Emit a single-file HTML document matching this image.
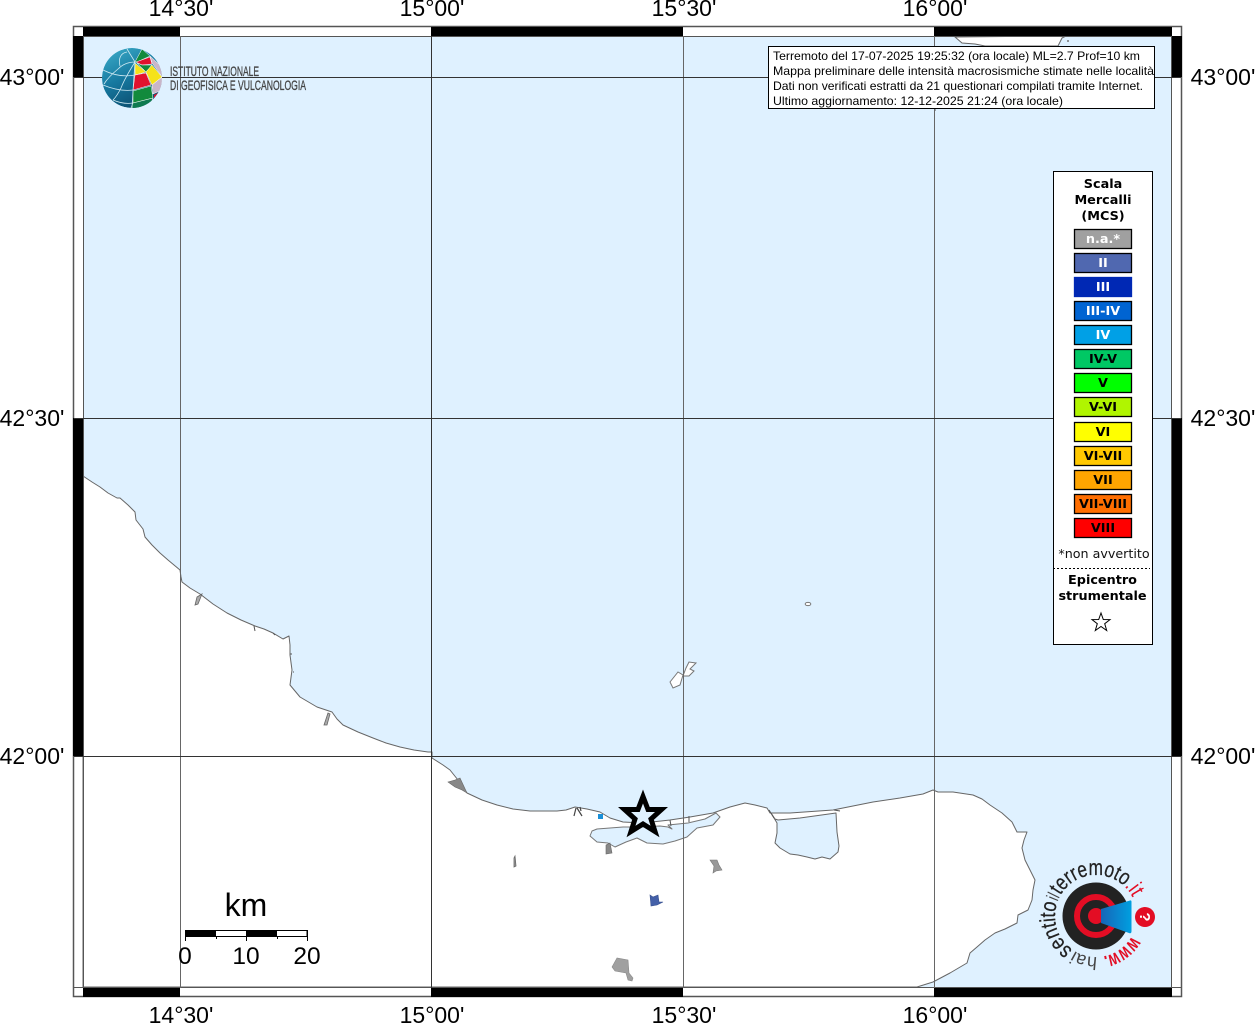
<!DOCTYPE html>
<html><head><meta charset="utf-8"><style>
html,body{margin:0;padding:0;background:#fff}
svg{display:block;filter:blur(0.35px)}
.ax{font:23px "Liberation Sans",sans-serif;fill:#000;text-anchor:middle}
.h{font:12px "Liberation Sans",sans-serif;fill:#000}
.lg{font:bold 12.8px "DejaVu Sans",sans-serif;text-anchor:middle}
.lb{font:bold 12.8px "DejaVu Sans",sans-serif;text-anchor:middle;fill:#000}
.ar{font:22px "Liberation Sans",sans-serif;fill:#222;stroke:#222;stroke-width:.25px}
</style></head><body>
<svg width="1255" height="1024" viewBox="0 0 1255 1024" xmlns="http://www.w3.org/2000/svg">
<defs>
<linearGradient id="gb" x1="0" y1="0" x2="0.5" y2="1"><stop offset="0" stop-color="#3fb0cc"/><stop offset="0.55" stop-color="#16789f"/><stop offset="1" stop-color="#0c4f70"/></linearGradient>
<linearGradient id="cone" x1="0" y1="0" x2="1" y2="0"><stop offset="0" stop-color="#1665b8"/><stop offset="1" stop-color="#00a0e0"/></linearGradient>
<clipPath id="gc"><circle cx="132" cy="78" r="30"/></clipPath>
<path id="ring" d="M1137 916A41 41 0 1 1 1055 916A41 41 0 1 1 1137 916"/>
</defs>
<!-- map -->
<rect x="83" y="36" width="1089" height="951" fill="#dff1ff"/>
<!-- land -->
<path fill="#fff" stroke="#666" stroke-width="1" stroke-linejoin="round" d="M83 476L92 482L100 487L108 493L117 498L120 498L128 505L135 512L136 520L143 529L145 537L152 545L160 553L168 560L180 570L181 577L182 582L190 588L200 594L213 604L227 613L241 620L255 626L264 629L273 633L283 639L289 636L290 645L290 655L292 670L290 685L300 697L317 707L332 712L337 719L343 725L358 732L373 738L386 743L400 747L414 750L428 752L432 752L432 758L443 765L450 770L458 780L467 793L482 800L497 805L513 809L530 811L557 811L566 810L575 807L587 809L600 812L610 818L623 822L643 823L670 820L690 817L713 813L730 807L745 803L755 805L767 808L770 813L790 813L833 810L853 806L873 802L900 798L923 794L933 790L938 792L953 792L973 795L982 799L990 805L1002 813L1012 822L1017 832L1027 832L1024 840L1022 848L1025 860L1030 870L1035 880L1033 890L1032 900L1028 910L1018 915L1017 923L1005 929L995 933L985 940L977 947L970 953L967 963L950 973L933 982L917 987L83 987Z"/>
<!-- top land -->
<path fill="#fff" stroke="#666" stroke-width="1" d="M955 37L962 43L975 44L985 46L1058 46L1062 38L1066 36Z"/>
<circle cx="1068" cy="41" r="1" fill="#777"/>
<path d="M935 108v3" stroke="#555" fill="none"/>
<!-- lagoons -->
<path fill="#dff1ff" stroke="#777" stroke-width="1" stroke-linejoin="round" d="M590 836L592 831L597 829L610 828L623 827L640 827L660 826L668 827L672 829L668 825L688 823L705 819L716 813L720 817L713 825L697 828L687 837L675 841L663 844L647 843L637 838L626 842L615 847L608 843L597 842Z"/>
<path fill="#dff1ff" stroke="#666" stroke-width="1" stroke-linejoin="round" d="M771 813L775 819L778 820L800 818L836 813L837 832L839 846L838 852L830 859L822 857L815 859L807 857L798 855L790 854L780 848L775 843L777 833L777 823Z"/>
<path fill="none" stroke="#555" stroke-width="1" d="M670 820L671 826M689 816L689 822M769 810L774 818M834 810L840 811"/>
<!-- details -->
<path fill="#888" stroke="#666" stroke-width=".6" d="M448 782L455 780L460 778L467 793L462 790L455 787Z"/>
<path fill="#888" stroke="#666" stroke-width=".6" d="M606 845L610 843L612 853L606 854Z"/>
<path fill="#999" stroke="#777" stroke-width=".6" d="M710 860L717 860L719 865L722 870L716 871L713 873L714 866Z"/>
<path fill="#a0a0a0" stroke="#888" stroke-width=".6" d="M612 967L617 958L628 960L629 973L633 978L632 981L628 980L626 973L615 971Z"/>
<path fill="#4460a8" stroke="#38518f" stroke-width=".6" d="M650 895L653 897L658 895L659 902L663 902L657 905L651 906Z"/>
<rect x="598" y="814" width="5" height="5" fill="#1a90d8"/>
<path fill="none" stroke="#444" stroke-width="1.2" d="M574 816L576 808M577 808L582 816M580 807L581 811"/>
<path fill="#999" stroke="#666" stroke-width=".8" d="M515 856L516 866L514 867L514 858Z"/>
<path fill="#aaa" stroke="#666" stroke-width=".8" d="M197 597L202 594L198 604L195 605Z"/>
<path fill="#aaa" stroke="#666" stroke-width=".8" d="M328 713L330 714L327 725L324 725Z"/>
<path fill="none" stroke="#555" d="M254 626L255 631M273 633L275 635M290 654l2 0M293 672l1 0"/>
<path fill="#fff" stroke="#777" stroke-width="1" d="M670 682L678 672L683 675L680 685L673 688Z"/>
<path fill="#fff" stroke="#777" stroke-width="1" d="M686 668L689 662L696 663L690 669L694 671L689 676L683 676Z"/>
<ellipse cx="808" cy="604" rx="2.8" ry="1.6" fill="#fff" stroke="#777"/>
<!-- frame -->
<rect x="73.500" y="26.500" width="1108" height="970" fill="none" stroke="#555" stroke-width="1.500"/>
<path fill="none" stroke="#555" stroke-width="1" d="M83.500 27V996M1171.500 27V996M74 36.500H1181M74 987.500H1181"/>
<path fill="#000" d="M83 27H180V36H83ZM431 27H683V36H431ZM934 27H1172V36H934ZM83 988H180V997H83ZM431 988H683V997H431ZM934 988H1172V997H934ZM73 36H83V77H73ZM73 418H83V756H73ZM1172 36H1182V77H1172ZM1172 418H1182V756H1172Z"/>
<!-- grid -->
<path fill="none" stroke="#666" stroke-width="1" d="M180.500 36V988M683.500 36V988M934.500 36V988"/>
<path fill="none" stroke="#333" stroke-width="1" d="M431.500 36V988M74 77.500H1181M74 418.500H1181M74 756.500H1181"/>
<!-- axis -->
<g class="ax">
<text x="181" y="16">14°30'</text><text x="432" y="16">15°00'</text><text x="684" y="16">15°30'</text><text x="935" y="16">16°00'</text>
<text x="181" y="1023">14°30'</text><text x="432" y="1023">15°00'</text><text x="684" y="1023">15°30'</text><text x="935" y="1023">16°00'</text>
<text x="32" y="85">43°00'</text><text x="32" y="426">42°30'</text><text x="32" y="764">42°00'</text>
<text x="1223" y="85">43°00'</text><text x="1223" y="426">42°30'</text><text x="1223" y="764">42°00'</text>
</g>
<!-- INGV logo -->
<g clip-path="url(#gc)">
<circle cx="132" cy="78" r="30" fill="url(#gb)"/>
<g stroke="#fff" stroke-width=".5">
<path fill="#128a3c" d="M135 62L142 49L150 56L137 62Z"/>
<path fill="#e2122e" d="M136 62L150 57L152 64L142 65Z"/>
<path fill="#c9b6c9" d="M150 56L163 68L163 78L152 63Z"/>
<path fill="#128a3c" d="M137 63L142 65L152 65L146 72Z"/>
<path fill="#f5e21a" d="M135 63L146 72L135 75Z"/>
<path fill="#f5e21a" d="M146 72L152 65L162 77L152 85Z"/>
<path fill="#e2122e" d="M135 75L146 73L151 85L133 90Z"/>
<path fill="#c9b6c9" d="M152 85L162 77L162 90L153 94Z"/>
<path fill="#128a3c" d="M133 91L151 86L153 98L133 103Z"/>
<path fill="#0e7a50" d="M133 103L153 98L148 110L130 110Z"/>
</g>
<path fill="#e2122e" d="M154 95L158 93L154 98Z"/>
<path fill="none" stroke="#cfeaf3" stroke-width=".8" d="M127 49L135 62M135 62C128 62 122 65 118 69C112 74 107 79 104 84M135 62C130 70 124 80 121 88C118 94 115 98 113 100M135 62C134 75 133 90 132 108M103 70C115 76 125 77 135 75M103 85C115 90 125 91 133 90M113 100C120 103 127 104 133 103M120 66C118 58 121 53 127 52"/>
</g>
<g font-family="'Liberation Sans',sans-serif" fill="#444" stroke="#444" stroke-width=".3" font-size="13.500">
<text x="170" y="76" textLength="89" lengthAdjust="spacingAndGlyphs">ISTITUTO NAZIONALE</text>
<text x="170" y="90" textLength="136" lengthAdjust="spacingAndGlyphs">DI GEOFISICA E VULCANOLOGIA</text>
</g>
<!-- header box -->
<rect x="768.500" y="46.500" width="386" height="62" fill="#fff" stroke="#000"/>
<text class="h" x="773" y="60" textLength="367" lengthAdjust="spacingAndGlyphs">Terremoto del 17-07-2025 19:25:32 (ora locale) ML=2.7 Prof=10 km</text>
<text class="h" x="773" y="75" textLength="381" lengthAdjust="spacingAndGlyphs">Mappa preliminare delle intensità macrosismiche stimate nelle località</text>
<text class="h" x="773" y="90" textLength="370" lengthAdjust="spacingAndGlyphs">Dati non verificati estratti da 21 questionari compilati tramite Internet.</text>
<text class="h" x="773" y="105" textLength="290" lengthAdjust="spacingAndGlyphs">Ultimo aggiornamento: 12-12-2025 21:24 (ora locale)</text>
<!-- legend -->
<rect x="1053.500" y="171.500" width="99" height="473" fill="#fff" stroke="#000"/>
<text class="lb" x="1103" y="188">Scala</text>
<text class="lb" x="1103" y="204">Mercalli</text>
<text class="lb" x="1103" y="220">(MCS)</text>
<g stroke="#000" stroke-width="1.300">
<rect x="1074.500" y="229.500" width="57" height="19" fill="#a0a0a0"/>
<rect x="1074.500" y="253.500" width="57" height="19" fill="#5068b0"/>
<rect x="1074.500" y="277.500" width="57" height="19" fill="#0028b4" stroke="#0028b4"/>
<rect x="1074.500" y="301.500" width="57" height="19" fill="#0064d2"/>
<rect x="1074.500" y="325.500" width="57" height="19" fill="#00a0e6"/>
<rect x="1074.500" y="349.500" width="57" height="19" fill="#00c864"/>
<rect x="1074.500" y="373.500" width="57" height="19" fill="#00ff00"/>
<rect x="1074.500" y="397.500" width="57" height="19" fill="#b0f500"/>
<rect x="1074.500" y="422.500" width="57" height="19" fill="#ffff00"/>
<rect x="1074.500" y="446.500" width="57" height="19" fill="#ffc800"/>
<rect x="1074.500" y="470.500" width="57" height="19" fill="#ffa500"/>
<rect x="1074.500" y="494.500" width="57" height="19" fill="#ff6e00"/>
<rect x="1074.500" y="518.500" width="57" height="19" fill="#ff0000"/>
</g>
<g class="lg" fill="#fff">
<text x="1103" y="243">n.a.*</text><text x="1103" y="267">II</text><text x="1103" y="291">III</text><text x="1103" y="315">III-IV</text><text x="1103" y="339">IV</text>
</g>
<g class="lb">
<text x="1103" y="363">IV-V</text><text x="1103" y="387">V</text><text x="1103" y="411">V-VI</text><text x="1103" y="436">VI</text><text x="1103" y="460">VI-VII</text><text x="1103" y="484">VII</text><text x="1103" y="508">VII-VIII</text><text x="1103" y="532">VIII</text>
</g>
<text x="1104" y="558" text-anchor="middle" font-family="'DejaVu Sans',sans-serif" font-size="12.700" fill="#111">*non avvertito</text>
<path d="M1053 568.500H1150" stroke="#000" stroke-dasharray="2 2" fill="none"/>
<text class="lb" x="1102.500" y="584">Epicentro</text>
<text class="lb" x="1102.500" y="600">strumentale</text>
<path d="M1101 613L1103.300 619.500L1110 619.600L1104.700 623.700L1106.700 630.500L1101 626.500L1095.300 630.500L1097.300 623.700L1092 619.600L1098.700 619.500Z" fill="#fff" stroke="#000" stroke-width="1"/>
<!-- epicentre star -->
<path d="M643 796.500L648 809.500L661.500 809.500L651 819L655 831.500L643 824L631 831.500L635 819L624.500 809.500L638 809.500Z" fill="#dff1ff" stroke="#000" stroke-width="5" stroke-linejoin="miter"/>
<!-- scale bar -->
<rect x="185" y="930" width="31" height="6" fill="#000"/><rect x="246" y="930" width="31" height="6" fill="#000"/>
<rect x="185.500" y="930.500" width="121.500" height="6" fill="none" stroke="#000"/>
<path d="M185.500 930V941M216.500 936V939M246.500 936V941M277.500 936V939M307.500 930V941" stroke="#000" fill="none"/>
<text x="246" y="916" text-anchor="middle" font-family="'Liberation Sans',sans-serif" font-size="32">km</text>
<g font-family="'Liberation Sans',sans-serif" font-size="24.500" text-anchor="middle">
<text x="185" y="964">0</text><text x="246" y="964">10</text><text x="307" y="964">20</text>
</g>
<!-- haisentito logo -->
<circle cx="1096" cy="916" r="33.500" fill="#222"/>
<circle cx="1096" cy="916" r="19" fill="none" stroke="#e30d24" stroke-width="6"/>
<circle cx="1096" cy="916" r="8" fill="#e30d24"/>
<path d="M1101 909L1130 900.500Q1131.500 900 1131.500 902V931Q1131.500 934 1129 933L1101 923Z" fill="url(#cone)"/>
<circle cx="1145" cy="917" r="10" fill="#e30d24"/>
<text transform="translate(1145 917) rotate(90)" x="0" y="5" text-anchor="middle" font-family="'Liberation Sans',sans-serif" font-weight="bold" font-size="15" fill="#fff">?</text>
<g class="ar">
<text font-weight="bold" style="fill:#e30d24;stroke:none;font-size:21px"><textPath href="#ring" startOffset="21" textLength="36" lengthAdjust="spacingAndGlyphs">www.</textPath></text>
<text style="font-size:18px;fill:#444;stroke:none"><textPath href="#ring" startOffset="63" textLength="24" lengthAdjust="spacingAndGlyphs">hai</textPath></text>
<text><textPath href="#ring" startOffset="89" textLength="53" lengthAdjust="spacingAndGlyphs">sentito</textPath></text>
<text style="font-size:18px;fill:#444;stroke:none"><textPath href="#ring" startOffset="143" textLength="6" lengthAdjust="spacingAndGlyphs">il</textPath></text>
<text><textPath href="#ring" startOffset="150" textLength="74" lengthAdjust="spacingAndGlyphs">terremoto</textPath></text>
<text style="fill:#e30d24;stroke:none"><textPath href="#ring" startOffset="224" textLength="14" lengthAdjust="spacingAndGlyphs">.it</textPath></text>
</g>
</svg>
</body></html>
